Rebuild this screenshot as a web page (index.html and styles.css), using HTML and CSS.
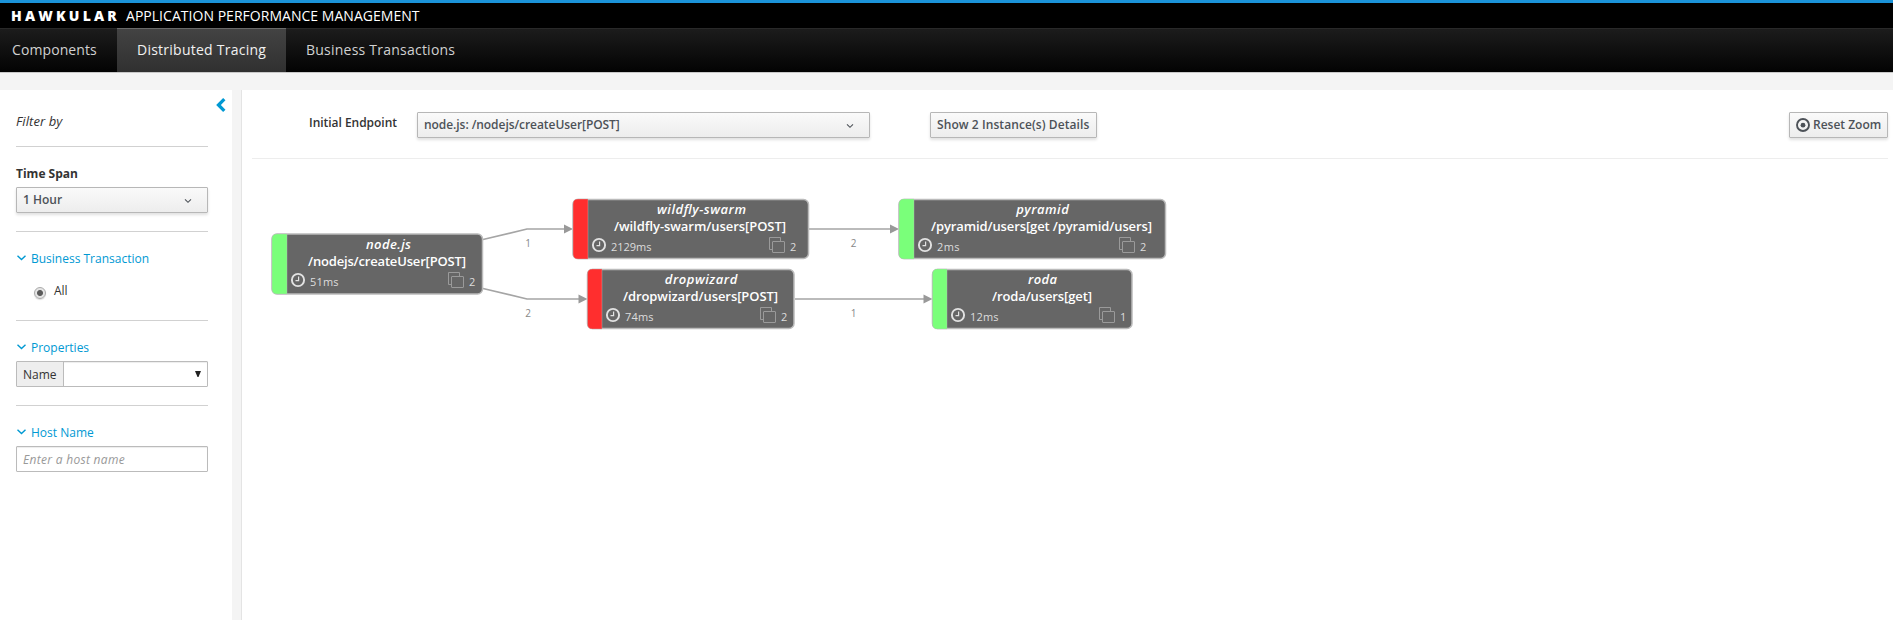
FILE: index.html
```html
<!DOCTYPE html>
<html lang="en">
<head>
<meta charset="utf-8">
<title>Hawkular APM</title>
<link rel="stylesheet" href="styles.css">
</head>
<body>
<header class="masthead">
  <div class="brand"><b class="brand-name">HAWKULAR</b><span class="brand-product">APPLICATION PERFORMANCE MANAGEMENT</span></div>
  <nav class="nav">
    <a class="nav-item first">Components</a>
    <a class="nav-item active">Distributed Tracing</a>
    <a class="nav-item">Business Transactions</a>
  </nav>
</header>
<div class="layout">
  <aside class="sidebar">
    <svg class="collapse" width="10" height="14" viewBox="0 0 10 14"><path d="M8.300 1.200 2.500 7 8.300 12.800" fill="none" stroke="#0099d3" stroke-width="3.300"/></svg>
    <section class="filter-head"><i>Filter by</i></section>
    <section class="block">
      <div class="label strong">Time Span</div>
      <div class="btn select"><span>1 Hour</span><svg class="caret" width="8" height="6" viewBox="0 0 8 6"><path d="M1 1.3 4 4.3 7 1.3" fill="none" stroke="#4d5258" stroke-width="1.1"/></svg></div>
    </section>
    <section class="block business">
      <div class="label link"><svg width="9" height="6" viewBox="0 0 9 6"><path d="M.5.8 4.5 4.6 8.500.8" fill="none" stroke="#0099d3" stroke-width="1.4"/></svg>Business Transaction</div>
      <div class="radio-row"><span class="radio"></span><span class="radio-text">All</span></div>
    </section>
    <section class="block props">
      <div class="label link"><svg width="9" height="6" viewBox="0 0 9 6"><path d="M.5.8 4.5 4.6 8.500.8" fill="none" stroke="#0099d3" stroke-width="1.4"/></svg>Properties</div>
      <div class="field"><span class="addon">Name</span><svg class="tri" width="6" height="6" viewBox="0 0 6 6"><path d="M0 0H6L3.500 6H2.500Z" fill="#222"/></svg></div>
    </section>
    <section class="block props">
      <div class="label link"><svg width="9" height="6" viewBox="0 0 9 6"><path d="M.5.8 4.5 4.6 8.500.8" fill="none" stroke="#0099d3" stroke-width="1.4"/></svg>Host Name</div>
      <div class="field placeholder">Enter a host name</div>
    </section>
  </aside>
  <main class="content">
    <div class="toolbar">
      <span class="endpoint-label">Initial Endpoint</span>
      <div class="btn select endpoint"><span>node.js: /nodejs/createUser[POST]</span><svg class="caret" width="8" height="6" viewBox="0 0 8 6"><path d="M1 1.3 4 4.3 7 1.3" fill="none" stroke="#4d5258" stroke-width="1.1"/></svg></div>
      <div class="btn details">Show 2 Instance(s) Details</div>
      <div class="btn reset"><svg width="14" height="14" viewBox="0 0 14 14"><circle cx="7" cy="7" r="6" fill="none" stroke="#4d5258" stroke-width="1.9"/><circle cx="7" cy="7.200" r="2.400" fill="#4d5258"/></svg>Reset Zoom</div>
    </div>
    <svg class="graph" width="1641" height="461" viewBox="252 159 1641 461">
      <defs>
        <g id="clock" fill="none" stroke="#e2e2e2"><circle r="6.100" stroke-width="1.900"/><path d="M.6-3.500V.6H-2.500" stroke-width="1.200"/></g>
        <g id="copies" fill="none" stroke="#9a9a9a"><rect x="3.500" y="4.500" width="12" height="11" rx=".5"/><path d="M3 12.500H.5V.5H11.500V4"/></g>
      </defs>
      <g class="edges">
        <path d="M483 239.500 527 229H566"/>
        <path d="M483 288.500 527 299H580"/>
        <path d="M809 229H892"/>
        <path d="M795 299H925"/>
      </g>
      <g class="arrows">
        <path d="M564 224.500 573 229 564 233.500Z"/>
        <path d="M578.500 294.500 587.500 299 578.500 303.500Z"/>
        <path d="M890 224.500 899 229 890 233.500Z"/>
        <path d="M923.500 294.500 932.500 299 923.500 303.500Z"/>
      </g>
      <g class="edge-label">
        <text x="528" y="247">1</text><text x="528" y="317">2</text>
        <text x="853.500" y="247">2</text><text x="853.500" y="317">1</text>
      </g>

      <rect class="node" x="272" y="234" width="210.500" height="60" rx="5"/>
      <path class="ok" d="M287 234V294H277Q272 294 272 289V239Q272 234 277 234Z"/>
      <text class="svc" x="388.500" y="249" textLength="45">node.js</text>
      <text class="op" x="387" y="266" textLength="158">/nodejs/createUser[POST]</text>
      <use href="#clock" x="298" y="280"/><text class="meta" x="310" y="286" textLength="28.500">51ms</text>
      <use href="#copies" x="448" y="272"/><text class="meta" x="469" y="286">2</text>

      <rect class="node" x="573" y="199.500" width="235.500" height="59" rx="5"/>
      <path class="bad" d="M588 199V259H578Q573 259 573 254V204Q573 199 578 199Z"/>
      <text class="svc" x="701.500" y="214" textLength="89">wildfly-swarm</text>
      <text class="op" x="700" y="231" textLength="172">/wildfly-swarm/users[POST]</text>
      <use href="#clock" x="599" y="245"/><text class="meta" x="611" y="251" textLength="40.500">2129ms</text>
      <use href="#copies" x="769" y="237"/><text class="meta" x="790" y="251">2</text>

      <rect class="node" x="587.500" y="269.500" width="206.500" height="59" rx="5"/>
      <path class="bad" d="M602 269V329H592.500Q587.500 329 587.500 324V274Q587.500 269 592.500 269Z"/>
      <text class="svc" x="701" y="284" textLength="72.500">dropwizard</text>
      <text class="op" x="700.500" y="301" textLength="155">/dropwizard/users[POST]</text>
      <use href="#clock" x="613" y="315"/><text class="meta" x="625" y="321" textLength="28.500">74ms</text>
      <use href="#copies" x="760" y="307"/><text class="meta" x="781" y="321">2</text>

      <rect class="node" x="899" y="199.500" width="266.500" height="59" rx="5"/>
      <path class="ok" d="M914 199V259H904Q899 259 899 254V204Q899 199 904 199Z"/>
      <text class="svc" x="1042.500" y="214" textLength="52.500">pyramid</text>
      <text class="op" x="1041.500" y="231" textLength="221">/pyramid/users[get /pyramid/users]</text>
      <use href="#clock" x="925" y="245"/><text class="meta" x="937" y="251" textLength="22.500">2ms</text>
      <use href="#copies" x="1119" y="237"/><text class="meta" x="1140" y="251">2</text>

      <rect class="node" x="932.500" y="269.500" width="199.500" height="59" rx="5"/>
      <path class="ok" d="M947 269V329H937.500Q932.500 329 932.500 324V274Q932.500 269 937.500 269Z"/>
      <text class="svc" x="1042.500" y="284" textLength="29">roda</text>
      <text class="op" x="1042" y="301" textLength="100">/roda/users[get]</text>
      <use href="#clock" x="958" y="315"/><text class="meta" x="970" y="321" textLength="28.500">12ms</text>
      <use href="#copies" x="1099" y="307"/><text class="meta" x="1120" y="321">1</text>
    </svg>
  </main>
</div>
</body>
</html>
```
FILE: styles.css
```css
* { box-sizing: border-box; }
body { margin: 0; height: 620px; overflow: hidden; background: #f4f4f4; color: #333; font: 12px/20px "Open Sans", "Noto Sans", sans-serif; display: flex; flex-direction: column; }
svg { display: block; flex: none; }
.masthead { height: 73px; flex: none; border-top: 3px solid #1b93d9; border-bottom: 1px solid #c8c8c8; background: #000; }
.brand { height: 25px; padding-left: 11px; display: flex; align-items: center; color: #fff; font-size: 14px; line-height: 25px; white-space: nowrap; }
.brand-name { width: 115px; font-weight: 800; font-size: 14px; letter-spacing: 3.200px; }
.brand-product { letter-spacing: 0.030px; }
.nav { display: flex; height: 44px; border-top: 1px solid #292929; background: linear-gradient(#1c1c1c, #030303); font-size: 14px; }
.nav-item { margin-top: -1px; height: 44px; padding: 0 20px; line-height: 41px; color: #d1d1d1; border-top: 1px solid transparent; letter-spacing: .23px; white-space: nowrap; }
.nav-item.first { padding-left: 12px; width: 117px; letter-spacing: .1px; }
.nav-item.active { width: 169px; color: #f1f1f1; background: linear-gradient(#434343, #303030); border-top-color: #6a6a6a; letter-spacing: .25px; }
.layout { flex: 1; display: flex; gap: 9px; padding-top: 17px; }
.sidebar { width: 232px; padding: 0 24px 0 16px; background: #fff; position: relative; }
.collapse { position: absolute; left: 216px; top: 8px; }
.filter-head { height: 56px; padding: 21px 0 0; font-size: 13px; letter-spacing: .1px; }
.block { height: 85px; border-top: 1px solid #d1d1d1; padding-top: 17px; }
.business { height: 89px; }
.label { height: 23px; white-space: nowrap; }
.strong { font-weight: 700; }
.link { display: flex; gap: 5px; color: #0099d3; padding-left: 1px; }
.link svg { margin-top: 6px; }
.radio-row { display: flex; align-items: center; gap: 8px; padding: 10px 0 0 18px; }
.radio { width: 12px; height: 12px; margin-top: 2px; border: 1px solid #aaa; border-radius: 50%; background: radial-gradient(circle, #5b5b5b 0 2.500px, #e5e5e5 3.500px); box-shadow: 0 1px 1px #ddd; }
.radio-text { margin-top: -1px; }
.btn { height: 26px; border: 1px solid #b7b7b7; border-radius: 1px; padding: 0 6px; background: linear-gradient(#fafafa, #ededed); box-shadow: 0 2px 3px rgba(3,3,3,.12); color: #4d5258; font-weight: 600; line-height: 24px; white-space: nowrap; }
.select { display: flex; align-items: center; justify-content: space-between; padding-right: 15px; }
.caret { margin-top: 2px; }
.field { height: 26px; display: flex; align-items: center; justify-content: space-between; border: 1px solid #bbb; border-radius: 1px; padding-right: 6px; box-shadow: inset 0 1px 1px rgba(3,3,3,.075); }
.addon { height: 24px; width: 47px; padding-left: 6px; line-height: 25px; background: #eee; border-right: 1px solid #bbb; }
.placeholder { padding: 2px 6px 0; color: #999; font-style: italic; letter-spacing: .3px; }
.content { flex: 1; min-width: 0; background: #fff; border-left: 1px solid #e4e4e4; }
.toolbar { height: 69px; margin: 0 5px 0 10px; padding: 22px 0 0 57px; display: flex; align-items: flex-start; border-bottom: 1px solid #ededed; }
.endpoint-label { width: 108px; padding-top: 1px; font-weight: 600; white-space: nowrap; letter-spacing: -.03px; }
.endpoint { width: 453px; padding-right: 15px; letter-spacing: -.06px; }
.details { margin-left: 60px; width: 167px; letter-spacing: .08px; }
.reset { margin-left: auto; width: 99px; display: flex; align-items: center; gap: 3px; }
.graph { margin-left: 10px; }
.edges { fill: none; stroke: #a5a5a5; stroke-width: 1.700; }
.arrows { fill: #999; }
.edge-label { font-size: 10px; fill: #888; text-anchor: middle; }
.node { fill: #666; stroke: #bbb; stroke-width: 1.500; }
.ok { fill: #7aff7a; stroke: #bbb; stroke-width: .4; }
.bad { fill: #ff2e2e; stroke: #bbb; stroke-width: .4; }
.svc, .op { font-size: 13px; font-weight: 600; fill: #fff; text-anchor: middle; }
.svc { font-style: italic; }
.meta { font-size: 11px; fill: #ddd; }
```
